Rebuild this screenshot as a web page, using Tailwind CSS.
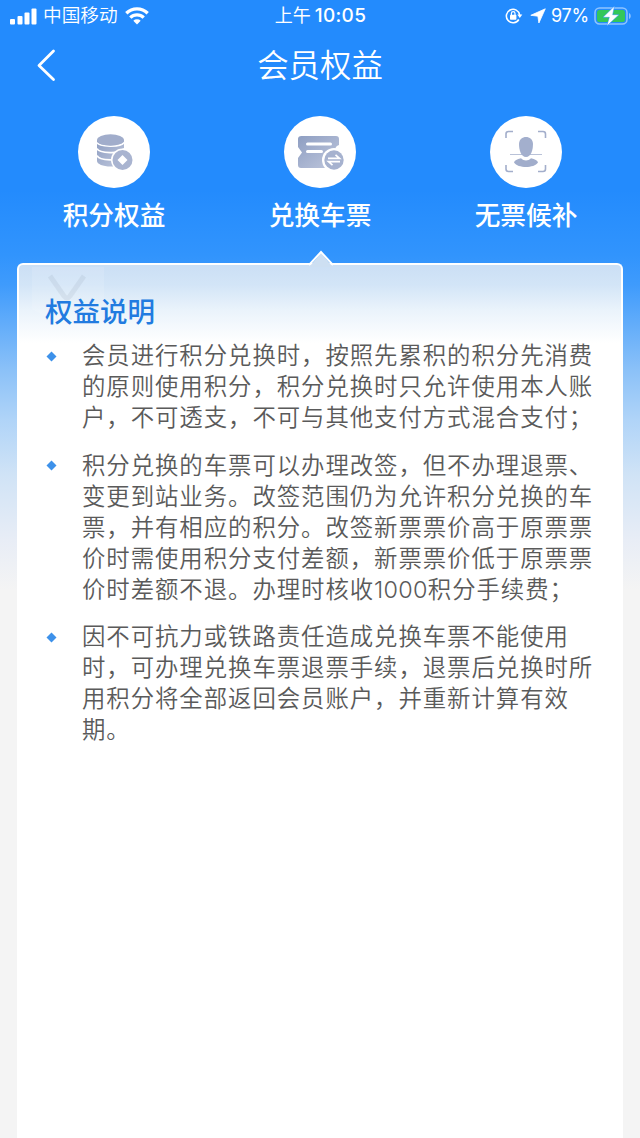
<!DOCTYPE html>
<html lang="zh-CN">
<head>
<meta charset="utf-8">
<title>会员权益</title>
<script src="https://cdn.jsdelivr.net/npm/@tailwindcss/browser@4"></script>
</head>
<body class="w-[640px] h-[1138px] overflow-hidden font-['Inter','Noto_Sans_CJK_SC',sans-serif] bg-[#f4f4f4]">
<div class="flex h-[1138px] flex-col bg-[linear-gradient(to_bottom,#238bfd_0px,#238bfd_190px,#3194fd_255px,#3f9bfc_285px,#63adfa_325px,#8bc1f8_370px,#b0d4f8_420px,#d0e3f6_475px,#e8edf6_540px,#f4f4f4_590px)]">
  <header class="flex h-8 shrink-0 items-center justify-between pl-[10px] pr-[10px] text-white">
    <div class="flex w-[220px] items-center">
      <svg width="27" height="18" viewBox="0 0 27 18" fill="#fff"><rect x="0" y="12" width="5" height="5.500" rx="1"/><rect x="7.500" y="9" width="5" height="8.500" rx="1"/><rect x="14.500" y="5.500" width="5" height="12" rx="1"/><rect x="21.500" y="1.500" width="5" height="16" rx="1"/></svg>
      <span class="ml-[6px] text-[18.700px] font-[350] leading-8 whitespace-nowrap">中国移动</span>
      <svg class="ml-[7px]" width="24" height="18" viewBox="0 0 24 18" fill="none" stroke="#fff" stroke-width="3.300"><path d="M1.300 6.200a15.500 15.500 0 0 1 21.400 0"/><path d="M5.300 10.700a9.500 9.500 0 0 1 13.400 0"/><path d="M12 17.500l-3.700-3.800a5.400 5.400 0 0 1 7.400 0z" fill="#fff" stroke="none"/></svg>
    </div>
    <div class="flex items-center pl-[3px] text-[18px] leading-8 whitespace-nowrap"><span>上午</span><span class="ml-[4px] text-[19px] font-medium tracking-[0.300px]">10:05</span></div>
    <div class="flex w-[222px] items-center justify-end pr-[1px]">
      <svg width="18" height="18" viewBox="0 0 18 18" fill="none" stroke="#fff" stroke-width="1.600"><path d="M13.800 12.500a6.700 6.700 0 1 1 .9-4.500"/><path d="M12.300 7.500h5l-2.500 3.400z" fill="#fff" stroke="none"/><rect x="5" y="7.700" width="6.400" height="5" rx=".8" fill="#fff" stroke="none"/><path d="M6.400 8V6.500a1.800 1.800 0 0 1 3.600 0V8" stroke-width="1.200"/></svg>
      <svg class="ml-[7px]" width="16" height="16" viewBox="0 0 16 16" fill="#fff" stroke="#fff" stroke-width=".8" stroke-linejoin="round"><path d="M15.300.8L8.900 15 7.900 8.200.8 7.300z"/></svg>
      <span class="ml-[5px] w-[39px] text-[18px] leading-8 tracking-[-0.200px]">97%</span>
      <svg class="ml-[4px] mr-[-3px]" width="38" height="20" viewBox="0 0 38 20"><rect x="1" y="2" width="32" height="16" rx="4.500" fill="none" stroke="#8fc4ff" stroke-width="1.500"/><rect x="3" y="4" width="28" height="12" rx="2.500" fill="#34c759"/><path d="M35 7c2.300 1 2.300 5 0 6z" fill="#8fc4ff"/><path d="M20.500 0L9 11.300h6.300L12.800 20 25 8.700h-6.300z" fill="#fff" stroke="#238bfd" stroke-width=".5"/></svg>
    </div>
  </header>
  <div class="grid h-[66px] shrink-0 grid-cols-[100px_1fr_100px] items-center text-white">
    <svg class="mb-[2px] ml-[36px]" width="20" height="34" viewBox="0 0 20 34" fill="none" stroke="#fff" stroke-width="2.800" stroke-linecap="round" stroke-linejoin="round"><path d="M17.500 3L3 17.500l14.500 14"/></svg>
    <h1 class="text-center text-[31.400px] leading-[68px] font-[350]">会员权益</h1>
  </div>
  <nav class="flex h-[153px] shrink-0 justify-between px-[44px] pt-[18px] text-[25.700px] font-medium text-white">
    <div class="flex w-[140px] flex-col items-center">
      <div class="flex size-[72px] items-center justify-center rounded-full bg-white">
        <svg width="72" height="72" viewBox="0 0 72 72"><defs><linearGradient id="g1" x1="0" y1="0" x2="1" y2="1"><stop offset="0" stop-color="#8e9ec2"/><stop offset="1" stop-color="#c0c8dd"/></linearGradient></defs><path d="M19 24v21c0 3 6 5.500 13.500 5.500S46 48 46 45V24z" fill="url(#g1)"/><path d="M19 26.500c2 4.500 24 5 27 0M19 32.500c2 5 24 6 27 0M19 39.500c2 5.500 24 6 27 0" fill="none" stroke="#fff" stroke-width="1.700"/><ellipse cx="32.500" cy="24" rx="13.500" ry="5.700" fill="#a1adcb"/><circle cx="44.500" cy="44" r="11.500" fill="#fff"/><circle cx="44.500" cy="44" r="10" fill="#a9b4d0"/><path d="M44.500 39L49.500 44l-5 5-5-5z" fill="#fff"/></svg>
      </div>
      <span class="mt-[8px] leading-10 whitespace-nowrap">积分权益</span>
    </div>
    <div class="flex w-[140px] flex-col items-center">
      <div class="flex size-[72px] items-center justify-center rounded-full bg-white">
        <svg width="72" height="72" viewBox="0 0 72 72"><path d="M17.500 20H52q3 0 3 3v6c-5 1-5 8 0 9v14H17q-3 0-3-3v-7l4-5.500-4-5.500v-8q0-3 3.500-3z" fill="url(#g1)"/><path d="M23.500 28h23M23.500 35.500h14" stroke="#fff" stroke-width="3" stroke-linecap="round"/><circle cx="50" cy="44" r="12" fill="#fff"/><circle cx="50" cy="44" r="9.700" fill="#a6b2cf"/><path d="M44 42.300h11.500l-4-3.500M56 45.700H44.500l4 3.500" fill="none" stroke="#fff" stroke-width="1.700"/></svg>
      </div>
      <span class="mt-[8px] leading-10 whitespace-nowrap">兑换车票</span>
    </div>
    <div class="flex w-[140px] flex-col items-center">
      <div class="flex size-[72px] items-center justify-center rounded-full bg-white">
        <svg width="72" height="72" viewBox="0 0 72 72"><path d="M16 22v-4q0-2.500 2.500-2.500H23M48 15.500h5q2.500 0 2.500 2.500v4M16 49v4q0 2.500 2.500 2.500H23M48 55.500h5q2.500 0 2.500-2.500v-4" fill="none" stroke="#a3aecb" stroke-width="1.600"/><path d="M20 38.500h32" stroke="#b9c2d8" stroke-width="1"/><path d="M29 28c0-9.500 14-9.500 14 0 0 6-2 13-7 13s-7-7-7-13z" fill="#a3afcd"/><path d="M24 46.500c.5-2.500 3-3 7-4.300 3 3 7 3 10 0 4 1.300 6.500 1.800 7 4.300-4 6-20 6-24 0z" fill="#a1adcb"/></svg>
      </div>
      <span class="mt-[8px] leading-10 whitespace-nowrap">无票候补</span>
    </div>
  </nav>
  <main class="relative mt-[12px] ml-[17px] w-[606px] grow rounded-t-[6px] border-[2px] border-b-0 border-white bg-[linear-gradient(to_bottom,#cbdff5_0px,#d3e5f7_20px,#eaf3fb_45px,#ffffff_78px)]">
    <svg class="absolute top-[-15px] left-[288px]" width="28" height="17" viewBox="0 0 28 17"><path d="M3 16L14 3l11 13v1H3z" fill="#cddff2"/><path d="M2 15L14 2l12 13" fill="none" stroke="#fff" stroke-width="2"/></svg>
    <svg class="absolute top-[2px] left-[12px]" width="76" height="65" viewBox="0 0 76 65"><path d="M1 0h72v43L37 62 1 42z" fill="#fff" fill-opacity=".12"/><path d="M19 9l14 20q3 4 6 0L53 9" fill="none" stroke="#8d9cb0" stroke-opacity=".16" stroke-width="5"/></svg>
    <h2 class="relative pt-[26.500px] pl-[26px] text-[27.500px] leading-[40px] font-medium text-[#217be0]">权益说明</h2>
    <ul class="relative mt-[8.500px] flex flex-col gap-[16.500px] pl-[26.500px] text-[23.400px] leading-[31px] tracking-[0.950px] font-[350] whitespace-nowrap text-[#5a5a5a]">
      <li class="flex"><svg class="mt-[10.500px] mr-[25.500px] shrink-0" width="11" height="11" viewBox="0 0 11 11"><path d="M5.500.5l5 5-5 5-5-5z" fill="#3d91ea"/></svg><p>会员进行积分兑换时，按照先累积的积分先消费<br>的原则使用积分，积分兑换时只允许使用本人账<br>户，不可透支，不可与其他支付方式混合支付；</p></li>
      <li class="flex"><svg class="mt-[10.500px] mr-[25.500px] shrink-0" width="11" height="11" viewBox="0 0 11 11"><path d="M5.500.5l5 5-5 5-5-5z" fill="#3d91ea"/></svg><p>积分兑换的车票可以办理改签，但不办理退票、<br>变更到站业务。改签范围仍为允许积分兑换的车<br>票，并有相应的积分。改签新票票价高于原票票<br>价时需使用积分支付差额，新票票价低于原票票<br>价时差额不退。办理时核收<span class="text-[23.400px] tracking-[0.300px] font-[350]">1000</span>积分手续费；</p></li>
      <li class="flex"><svg class="mt-[10.500px] mr-[25.500px] shrink-0" width="11" height="11" viewBox="0 0 11 11"><path d="M5.500.5l5 5-5 5-5-5z" fill="#3d91ea"/></svg><p>因不可抗力或铁路责任造成兑换车票不能使用<br>时，可办理兑换车票退票手续，退票后兑换时所<br>用积分将全部返回会员账户，并重新计算有效<br>期。</p></li>
    </ul>
  </main>
</div>
</body>
</html>
